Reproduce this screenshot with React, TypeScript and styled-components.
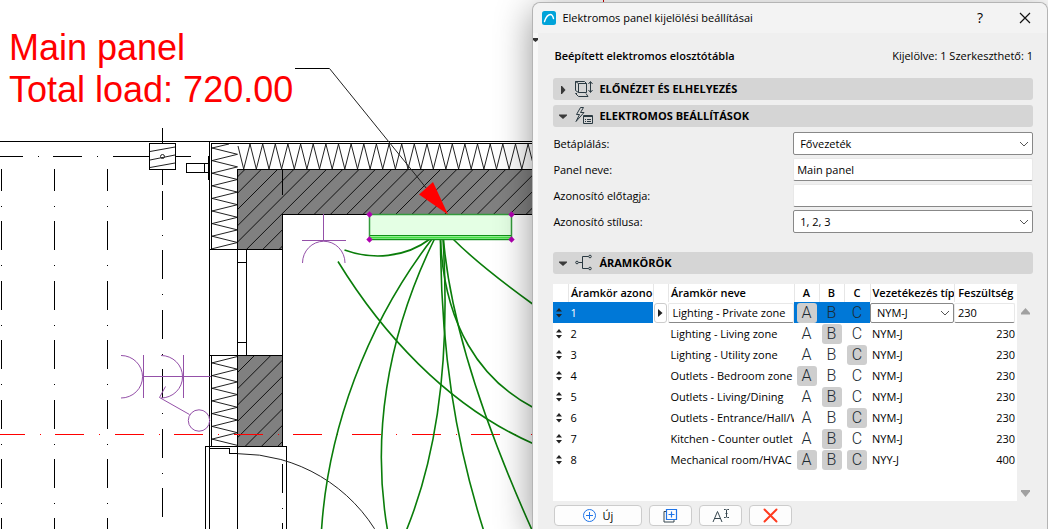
import React, { useState } from "react";
import styled, { createGlobalStyle } from "styled-components";

const GlobalStyle = createGlobalStyle`
  *, *::before, *::after { box-sizing: border-box; }
  html, body { margin: 0; padding: 0; background: #fff; }
  body, button, input, select, table {
    font-family: "Open Sans", "Noto Sans", sans-serif;
    font-size: 11px;
    line-height: 16px;
    color: #000;
  }
`;

const Workspace = styled.main`
  display: grid;
  grid-template-columns: minmax(0, 1fr);
  min-height: 100vh;
  overflow: hidden;
`;

const Canvas = styled.section`
  grid-area: 1 / 1;
  display: grid;
  min-width: 0;
`;

const Plan = styled.svg`
  display: block;
  width: 100%;
  height: 100%;
`;

const Dialog = styled.section`
  grid-area: 1 / 1;
  justify-self: end;
  width: 49.2%;
  min-width: 515px;
  margin-top: 2px;
  z-index: 1;
  display: flex;
  flex-direction: column;
  background: #efefef;
  border: 1px solid #b4b4b4;
  border-bottom: 0;
  border-radius: 8px 8px 0 0;
  box-shadow: 0 8px 36px rgba(0, 0, 0, 0.42);
`;

const TitleBar = styled.header`
  display: flex;
  align-items: center;
  height: 30px;
  padding: 0 15px 0 9px;
  background: #f3f3f3;
  border-radius: 8px 8px 0 0;
`;

const DialogTitle = styled.h1`
  flex: 1;
  margin: 0 0 0 6px;
  font-size: 11px;
  font-weight: 400;
  line-height: 16px;
`;

const TitleButton = styled.button`
  display: grid;
  place-items: center;
  width: 14px;
  height: 20px;
  margin-left: 31px;
  padding: 0;
  border: 0;
  background: none;
  font-size: 14px;
`;

const Body = styled.div`
  flex: 1;
  display: flex;
`;

const Splitter = styled.div`
  width: 5px;
  padding-top: 5px;
  background: #f8f8f8;
`;

const Content = styled.div`
  flex: 1;
  min-width: 0;
  padding: 15px 14px 2px 15px;
`;

const Summary = styled.div`
  display: flex;
  justify-content: space-between;
  height: 16px;
  margin-bottom: 14px;

  strong {
    padding-left: 1px;
    font-weight: 600;
  }
`;

const Section = styled.section<{ $gap: number }>`
  margin-bottom: ${(p) => p.$gap}px;
`;

const SectionBar = styled.h2`
  margin: 0;
`;

const SectionButton = styled.button`
  display: flex;
  align-items: center;
  width: 100%;
  height: 22px;
  padding: 0 6px;
  border: 0;
  border-radius: 3px;
  background: #d5d5d5;
  font-size: 11px;
  font-weight: 700;
  text-align: left;

  svg:first-child { margin-right: 6px; }
  svg:last-of-type { margin-right: 5px; }
`;

const Form = styled.div`
  display: grid;
  grid-template-columns: 1fr 1fr;
  row-gap: 3px;
  align-items: center;
  padding-top: 5px;
`;

const SelectBox = styled.div`
  position: relative;
  display: grid;

  svg {
    position: absolute;
    right: 4px;
    top: 50%;
    margin-top: -4px;
    pointer-events: none;
  }
`;

const Select = styled.select<{ $compact?: boolean }>`
  appearance: none;
  width: 100%;
  height: ${(p) => (p.$compact ? 20 : 23)}px;
  padding: 0 18px 0 6px;
  border: 1px solid #888;
  border-radius: 2px;
  background: #fff;
  outline: 0;
`;

const TextInput = styled.input<{ $compact?: boolean }>`
  width: 100%;
  height: ${(p) => (p.$compact ? 20 : 23)}px;
  padding: 0 3px;
  border: 1px solid #e8e8e8;
  border-bottom-color: #888;
  border-radius: 2px;
  background: #fff;
  outline: 0;
`;

const ListArea = styled.div`
  display: flex;
  margin-top: 10px;
  min-height: 217px;
`;

const ListPane = styled.div`
  flex: 1;
  min-width: 0;
  background: #fff;
`;

const Table = styled.table`
  width: 100%;
  table-layout: fixed;
  border-collapse: collapse;
`;

const HeadCell = styled.th<{ $align?: string }>`
  height: 18px;
  padding: 0 0 0 ${(p) => (p.$align === "center" ? 0 : 2)}px;
  border-right: 1px solid #e6e6e6;
  font-weight: 600;
  text-align: ${(p) => p.$align ?? "left"};
  white-space: nowrap;
  overflow: hidden;

  &:last-child { border-right: 0; }
`;

const Row = styled.tr<{ $active: boolean }>`
  height: 21px;
  background: ${(p) => (p.$active ? "#0078d7" : "#fff")};
`;

const Cell = styled.td<{ $align?: string; $light?: boolean; $editor?: boolean }>`
  height: 21px;
  padding: 0 ${(p) => (p.$align === "right" ? 2 : 0)}px 0 ${(p) => (p.$align || p.$editor ? 0 : 2)}px;
  color: ${(p) => (p.$light ? "#fff" : "#000")};
  background: ${(p) => (p.$editor ? "#fff" : "transparent")};
  text-align: ${(p) => p.$align ?? "left"};
  vertical-align: middle;
  white-space: nowrap;
  overflow: hidden;
`;

const SortHandle = styled.button`
  display: grid;
  place-items: center;
  width: 12px;
  height: 20px;
  padding: 0;
  border: 0;
  background: none;
`;

const ExpandButton = styled.button`
  display: grid;
  place-items: center;
  width: 13px;
  height: 20px;
  margin: 0 auto;
  padding: 0;
  border: 1px solid #ccc;
  border-radius: 3px;
  background: #fff;
`;

const PhaseButton = styled.button<{ $on: boolean }>`
  display: block;
  width: 20px;
  height: 20px;
  margin: 0 auto;
  padding: 0;
  border: 0;
  border-radius: 3px;
  background: ${(p) => (p.$on ? "#cecece" : "transparent")};
  color: #1c2a31;
  font-family: Roboto, "Open Sans", sans-serif;
  font-size: 16px;
  font-weight: 300;
  line-height: 20px;
  text-align: center;
`;

const ScrollRail = styled.div`
  display: flex;
  flex-direction: column;
  justify-content: space-between;
  align-items: center;
  width: 16px;
  padding: 24px 0 4px;
`;

const ArrowButton = styled.button`
  display: block;
  padding: 0;
  border: 0;
  background: none;
  line-height: 0;
`;

const Toolbar = styled.div`
  display: flex;
  gap: 7px;
  padding: 4px 1px 0;
`;

const ToolButton = styled.button<{ $wide?: boolean }>`
  display: flex;
  align-items: center;
  justify-content: center;
  gap: 6px;
  width: ${(p) => (p.$wide ? 88 : 43)}px;
  height: 21px;
  padding: 0;
  border: 1px solid #ccc;
  border-radius: 4px;
  background: #fdfdfd;
  font-size: 11px;
`;

const Chevron = () => (
  <svg width="10" height="8" viewBox="0 0 10 8" fill="none" stroke="#555" aria-hidden="true">
    <path d="M1 2l4 4 4-4" />
  </svg>
);

const Disclosure = ({ open }: { open: boolean }) => (
  <svg width="9" height="9" viewBox="0 0 9 9" fill="#3a3a3a" aria-hidden="true">
    {open ? <path d="M0 2.500h8v1L4 7L0 3.500z" /> : <path d="M2 1h1L6.500 5L3 9H2z" />}
  </svg>
);

const PreviewIcon = () => (
  <svg width="20" height="18" viewBox="0 0 20 18" fill="none" stroke="#2b3a42" aria-hidden="true">
    <path d="M4.500 3.500h8v9h-8zM4.500 3.500l-3-2v9l3 2M1.500 1.500h9l2 2" />
    <path d="M3 13.500H1.500l3 3h9.500l-2-3M16.500 2v10M14.500 4l2-2.500 2 2.500M14.500 10l2 2.500 2-2.500" />
  </svg>
);

const ElectricIcon = () => (
  <svg width="20" height="20" viewBox="0 0 20 20" fill="none" stroke="#2b3a42" aria-hidden="true">
    <path d="M6.500 1.500L2.500 8.500h3L2 15.500L10 6.500H6.500l3-5z" />
    <path d="M9.500 9.500h9v8h-9zM9.500 10.500h9M11 13.500h1M13 13.500h4M11 15.500h1M13 15.500h4" />
  </svg>
);

const CircuitIcon = () => (
  <svg width="20" height="18" viewBox="0 0 20 18" fill="none" stroke="#2b3a42" aria-hidden="true">
    <path d="M4.500 8.500h4M14.500 2.500h-6v12h6" />
    <circle cx="3" cy="8.500" r="1.300" />
    <circle cx="16" cy="2.500" r="1.300" />
    <circle cx="16" cy="14.500" r="1.300" />
  </svg>
);

type SectionProps = {
  title: string;
  icon: React.ReactNode;
  open: boolean;
  gap: number;
  children?: React.ReactNode;
};

const PanelSection = ({ title, icon, open, gap, children }: SectionProps) => (
  <Section $gap={gap}>
    <SectionBar>
      <SectionButton type="button" aria-expanded={open}>
        <Disclosure open={open} />
        {icon}
        {title}
      </SectionButton>
    </SectionBar>
    {children}
  </Section>
);

const circuits = [
  { id: 1, name: "Lighting - Private zone", phases: "A", cable: "NYM-J", volts: 230 },
  { id: 2, name: "Lighting - Living zone", phases: "B", cable: "NYM-J", volts: 230 },
  { id: 3, name: "Lighting - Utility zone", phases: "C", cable: "NYM-J", volts: 230 },
  { id: 4, name: "Outlets - Bedroom zone", phases: "A", cable: "NYM-J", volts: 230 },
  { id: 5, name: "Outlets - Living/Dining", phases: "B", cable: "NYM-J", volts: 230 },
  { id: 6, name: "Outlets - Entrance/Hall/W", phases: "C", cable: "NYM-J", volts: 230 },
  { id: 7, name: "Kitchen - Counter outlet", phases: "B", cable: "NYM-J", volts: 230 },
  { id: 8, name: "Mechanical room/HVAC", phases: "ABC", cable: "NYY-J", volts: 400 },
];

const PHASES = ["A", "B", "C"];

const zigzag = (x: number, y: number, dx: number, dy: number, ax: number, ay: number, n: number) => {
  let d = `M${x} ${y}`;
  for (let i = 1; i <= n; i++) {
    const side = i % 2;
    d += `L${(x + dx * i + ax * side).toFixed(1)} ${(y + dy * i + ay * side).toFixed(1)}`;
  }
  return d;
};

const hatch = Array.from({ length: 38 }, (_, i) => {
  const sum = 414.4 + 16.3 * i;
  return `M${sum - 150} 150L${sum - 450} 450`;
}).join("");

const wall = "M237.500 169.500H700V214.500H282.500V249.500H237.500zM237.500 355.500h45v91h-45z";

const FloorPlan = () => (
  <Plan role="img" aria-label="Main panel floor plan">
    <defs>
      <clipPath id="walls">
        <path d={wall} />
      </clipPath>
    </defs>

    <g stroke="#000" fill="none" shapeRendering="crispEdges">
      <path
        d="M1.500 169V540M54.500 169V540M107.500 169V540"
        strokeDasharray="29 15 1 14.4"
        strokeDashoffset="7"
      />
      <path d="M162.500 191V520" strokeDasharray="29 15 1 14.4" />
      <path d="M162.500 128V144M162.500 169V185M176 156.500H191" />
      <path d="M0 156.500H23M38 156.500h1M53 156.500H82M97 156.500h1M113 156.500H149" />
      <path d="M149.500 143.500h26v26h-26z" />
      <path d="M186.500 163.500h22v9h-22zM204.500 163v9" />
      <path d="M208.500 156v24" />
    </g>
    <g stroke="#222" fill="none">
      <path d="M150 151.500l25-4.500M150 160l25-5M150 167.500l25-4.500" />
      <circle cx="162.500" cy="156.500" r="2" />
    </g>

    <path d={wall} fill="#808080" />
    <path d={hatch} stroke="#111" clipPath="url(#walls)" />
    <g stroke="#222" fill="none">
      <path d="M229 144L212 148" />
      <path d={zigzag(212, 148, 0, 6.3, 25.5, 0, 16)} />
      <path d={zigzag(237.5, 356.5, 0, 6.35, -25.5, 0, 14)} />
      <path d="M238 146L243.700 169" />
      <path d={zigzag(243.7, 169, 6.32, 0, 0, -25, 60)} />
    </g>

    <g stroke="#000" fill="none" shapeRendering="crispEdges">
      <path d={wall} />
      <path d="M282.500 169V195M0 141.500H700M211.500 143.500H700M211.500 143V249M209.500 141V540" />
      <path d="M209 249.500H238M209 355.500H238M211.500 355V446M282.500 249V355" />
      <path d="M237.500 249V355M246.500 249V355M237 262.500h9M237 342.500h9" />
      <path d="M205.500 540V446.500H286.500V540M237.500 446V540" />
      <path d="M209 448.500H229.500V453.500H238M282.500 464v29M282.500 508v1M282.500 523v20" />
    </g>
    <path d="M238 453.700A162 162 0 0 1 380 538" stroke="#222" fill="none" />

    <g stroke="#9450a8" fill="none">
      <path d="M323.500 214v26.500M302 240.500h44M302.500 263a21 21.500 0 0 1 42.500 0" />
      <path d="M121 355.500a21.500 21.200 0 0 1 0 42.500M161 355.500a21.500 21.200 0 0 1 0 42.500" />
      <path d="M143.500 355v43M183.500 355v43M143 376.500H211" />
      <path d="M189.500 414.500L159.500 397.500L165.500 386.500" />
      <circle cx="199" cy="420.500" r="10.700" />
    </g>

    <path
      d="M0 434.500H700"
      stroke="#f00"
      strokeDasharray="29 15 1 14.4"
      strokeDashoffset="4"
      shapeRendering="crispEdges"
    />
    <path d="M603.500 0v4" stroke="#c00" />

    <g stroke="#0a7d0a" strokeWidth="1.600" fill="none">
      <path d="M344.500 250C372 260 405 258 430 239" />
      <path d="M338 261.500C380 330 445 405 534 444" />
      <path d="M432 239C366 325 328 430 321.500 530" />
      <path d="M434.500 239C385 340 372 440 387.500 530" />
      <path d="M440.500 239C441 350 455 440 483.500 530" />
      <path d="M443 239C450 350 439 450 406.500 530" />
      <path d="M440.500 239C444 325 480 380 534 408" />
      <path d="M443.500 239C450 320 485 425 532 530" />
      <path d="M453 239Q480 266 534 305" />
    </g>

    <path d="M369.500 214.500h142v25h-142z" fill="#e4ffe4" stroke="#339a3c" strokeWidth="1.500" />
    <path d="M370 237.500h141" stroke="#3fe03f" strokeWidth="2" />
    <path d="M370 235.500h141M370 239.500h141" stroke="#109018" />
    <g fill="#b000b0">
      {[369.5, 511.5].map((x) =>
        [214.5, 239.5].map((y) => (
          <path key={`${x}-${y}`} d={`M${x} ${y - 3.2}l3.200 3.200l-3.200 3.200l-3.200-3.200z`} />
        )),
      )}
    </g>

    <path d="M295 68.500H329.500" stroke="#000" />
    <path d="M329.500 68.500L427 189" stroke="#222" />
    <path d="M433 182L419 194.500L448 214.500z" fill="#f00" />
    <g fill="#f00" fontFamily='"Liberation Sans", Arial, sans-serif' fontSize="36">
      <text x="9" y="60">Main panel</text>
      <text x="9" y="102">Total load: 720.00</text>
    </g>
  </Plan>
);

export default function App() {
  const [supply, setSupply] = useState("Fővezeték");
  const [style, setStyle] = useState("1, 2, 3");

  return (
    <>
      <GlobalStyle />
      <Workspace>
        <Canvas>
          <FloorPlan />
        </Canvas>

        <Dialog role="dialog" aria-labelledby="dialog-title">
          <TitleBar>
            <svg width="14" height="14" viewBox="0 0 14 14" fill="none" aria-hidden="true">
              <rect width="14" height="14" rx="2.500" fill="#00a3d9" />
              <path d="M2.500 10.500C4 6 6 3.500 8.500 3.500C10.300 3.500 11 5.500 11.500 7.500" stroke="#fff" strokeWidth="1.400" strokeLinecap="round" />
            </svg>
            <DialogTitle id="dialog-title">Elektromos panel kijelölési beállításai</DialogTitle>
            <TitleButton type="button" aria-label="Súgó">?</TitleButton>
            <TitleButton type="button" aria-label="Bezárás">
              <svg width="12" height="12" viewBox="0 0 12 12" stroke="#111" strokeWidth="1.200" aria-hidden="true">
                <path d="M1 1l10 10M11 1L1 11" />
              </svg>
            </TitleButton>
          </TitleBar>

          <Body>
            <Splitter>
              <svg width="5" height="4" viewBox="0 0 5 4" fill="#333" display="block" aria-hidden="true">
                <path d="M0 0h5v2L2.500 4L0 2z" />
              </svg>
            </Splitter>
            <Content>
              <Summary>
                <strong>Beépített elektromos elosztótábla</strong>
                <span>Kijelölve: 1 Szerkeszthető: 1</span>
              </Summary>

              <PanelSection title="ELŐNÉZET ÉS ELHELYEZÉS" icon={<PreviewIcon />} open={false} gap={5} />

              <PanelSection title="ELEKTROMOS BEÁLLÍTÁSOK" icon={<ElectricIcon />} open gap={19}>
                <Form>
                  <label htmlFor="supply">Betáplálás:</label>
                  <SelectBox>
                    <Select id="supply" value={supply} onChange={(e) => setSupply(e.target.value)}>
                      <option>Fővezeték</option>
                    </Select>
                    <Chevron />
                  </SelectBox>
                  <label htmlFor="panel-name">Panel neve:</label>
                  <TextInput id="panel-name" defaultValue="Main panel" />
                  <label htmlFor="prefix">Azonosító előtagja:</label>
                  <TextInput id="prefix" />
                  <label htmlFor="id-style">Azonosító stílusa:</label>
                  <SelectBox>
                    <Select id="id-style" value={style} onChange={(e) => setStyle(e.target.value)}>
                      <option>1, 2, 3</option>
                    </Select>
                    <Chevron />
                  </SelectBox>
                </Form>
              </PanelSection>

              <PanelSection title="ÁRAMKÖRÖK" icon={<CircuitIcon />} open gap={0}>
                <ListArea>
                  <ListPane>
                    <Table>
                      <colgroup>
                        <col width="15" />
                        <col width="85" />
                        <col width="15" />
                        <col />
                        <col width="25" />
                        <col width="25" />
                        <col width="26" />
                        <col width="84" />
                        <col width="63" />
                      </colgroup>
                      <thead>
                        <tr>
                          <HeadCell />
                          <HeadCell>Áramkör azono</HeadCell>
                          <HeadCell />
                          <HeadCell>Áramkör neve</HeadCell>
                          {PHASES.map((p) => (
                            <HeadCell key={p} $align="center">{p}</HeadCell>
                          ))}
                          <HeadCell>Vezetékezés típ</HeadCell>
                          <HeadCell $align="center">Feszültség</HeadCell>
                        </tr>
                      </thead>
                      <tbody>
                        {circuits.map((c, i) => {
                          const active = i === 0;
                          return (
                            <Row key={c.id} $active={active}>
                              <Cell $align="left">
                                <SortHandle type="button" aria-label={`${c.id} áthelyezése`}>
                                  <svg width="6" height="10" viewBox="0 0 6 10" fill="#222" aria-hidden="true">
                                    <path d="M3 0l3 3.500H0zM0 6h6L3 9.500z" />
                                  </svg>
                                </SortHandle>
                              </Cell>
                              <Cell $light={active}>{c.id}</Cell>
                              <Cell $editor={active}>
                                {active && (
                                  <ExpandButton type="button" aria-label="Megnyitás">
                                    <svg width="5" height="8" viewBox="0 0 5 8" fill="#222" aria-hidden="true">
                                      <path d="M0 0v8l4.500-4z" />
                                    </svg>
                                  </ExpandButton>
                                )}
                              </Cell>
                              <Cell $editor={active}>
                                {active ? (
                                  <TextInput $compact aria-label="Áramkör neve" defaultValue={c.name} />
                                ) : (
                                  c.name
                                )}
                              </Cell>
                              {PHASES.map((p) => (
                                <Cell key={p} $align="center">
                                  <PhaseButton type="button" $on={c.phases.includes(p)} aria-pressed={c.phases.includes(p)}>
                                    {p}
                                  </PhaseButton>
                                </Cell>
                              ))}
                              <Cell $editor={active}>
                                {active ? (
                                  <SelectBox>
                                    <Select $compact aria-label="Vezetékezés típusa" defaultValue={c.cable}>
                                      <option>NYM-J</option>
                                      <option>NYY-J</option>
                                    </Select>
                                    <Chevron />
                                  </SelectBox>
                                ) : (
                                  c.cable
                                )}
                              </Cell>
                              <Cell $editor={active} $align="right">
                                {active ? (
                                  <TextInput $compact aria-label="Feszültség" defaultValue={c.volts} />
                                ) : (
                                  c.volts
                                )}
                              </Cell>
                            </Row>
                          );
                        })}
                      </tbody>
                    </Table>
                  </ListPane>
                  <ScrollRail>
                    <ArrowButton type="button" aria-label="Fel">
                      <svg width="9" height="7" viewBox="0 0 9 7" fill="#a0a0a0" aria-hidden="true">
                        <path d="M4.500 0L9 5v1.500H0V5z" />
                      </svg>
                    </ArrowButton>
                    <ArrowButton type="button" aria-label="Le">
                      <svg width="9" height="7" viewBox="0 0 9 7" fill="#a0a0a0" aria-hidden="true">
                        <path d="M0 0h9v1.500L4.500 7L0 1.500z" />
                      </svg>
                    </ArrowButton>
                  </ScrollRail>
                </ListArea>
                <Toolbar>
                  <ToolButton type="button" $wide>
                    <svg width="13" height="13" viewBox="0 0 13 13" fill="none" stroke="#1f74e8" aria-hidden="true">
                      <circle cx="6.500" cy="6.500" r="6" />
                      <path d="M6.500 3v7M3 6.500h7" />
                    </svg>
                    Új
                  </ToolButton>
                  <ToolButton type="button" aria-label="Másolat">
                    <svg width="15" height="15" viewBox="0 0 15 15" fill="none" aria-hidden="true">
                      <path d="M3.500 3.500h-2.500v10.500h10v-2.500" stroke="#37474f" />
                      <path d="M3.500 1.500h10v10h-10zM8.500 3.500v6M5.500 6.500h6" stroke="#1f74e8" strokeWidth="1.200" />
                    </svg>
                  </ToolButton>
                  <ToolButton type="button" aria-label="Átnevezés">
                    <svg width="18" height="15" viewBox="0 0 18 15" fill="none" stroke="#37474f" aria-hidden="true">
                      <path d="M1 14L5.500 3.500L10 14M2.500 10.500h6" />
                      <path d="M12 1.500h1.500l1 .500l1-.500h1.500M12 9.500h1.500l1-.500l1 .500h1.500M14.500 2v7M13.500 5.500h2" />
                    </svg>
                  </ToolButton>
                  <ToolButton type="button" aria-label="Törlés">
                    <svg width="15" height="15" viewBox="0 0 15 15" stroke="#ff3b1f" strokeWidth="2" strokeLinecap="round" aria-hidden="true">
                      <path d="M1.500 1.500l12 12M13.500 1.500l-12 12" />
                    </svg>
                  </ToolButton>
                </Toolbar>
              </PanelSection>
            </Content>
          </Body>
        </Dialog>
      </Workspace>
    </>
  );
}
